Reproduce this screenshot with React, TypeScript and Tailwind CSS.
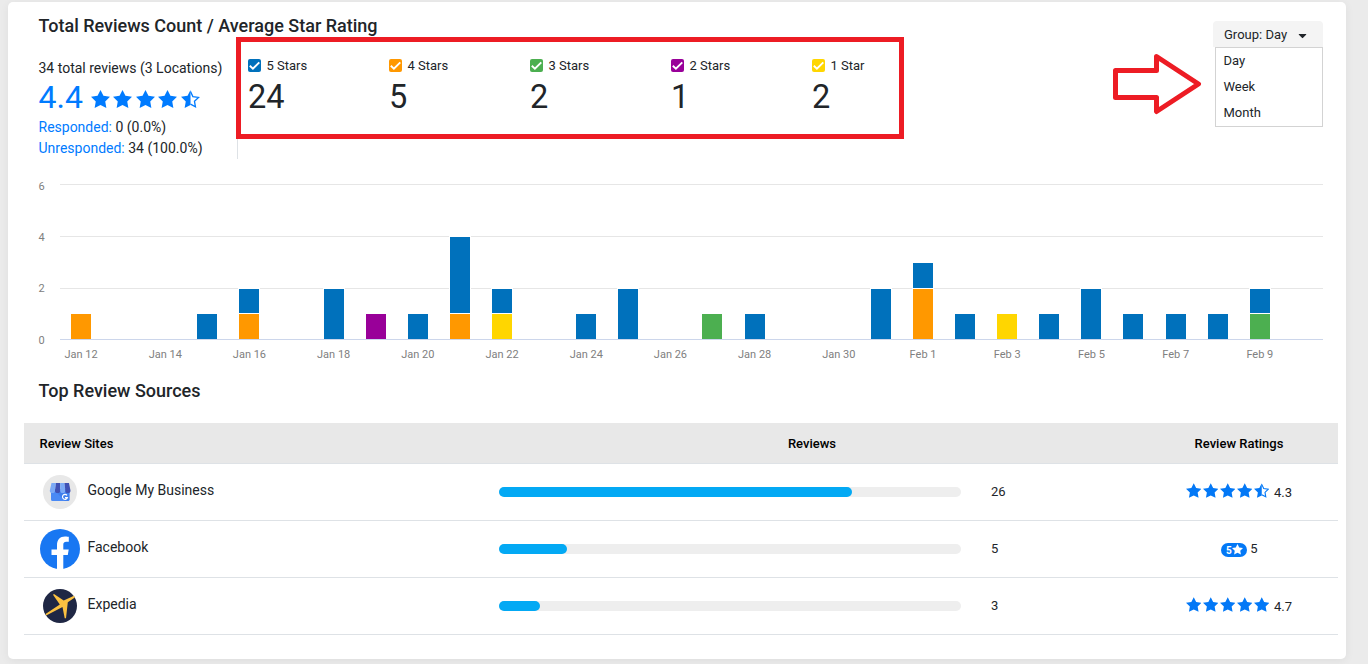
import React from 'react';
import { FaCaretDown } from 'react-icons/fa';

const BLUE = '#0071bc';
const ORANGE = '#ff9800';
const GREEN = '#4caf50';
const PURPLE = '#990099';
const YELLOW = '#ffd600';

const STATS = [
  { label: '5 Stars', count: 24, box: 'bg-[#0071bc]' },
  { label: '4 Stars', count: 5, box: 'bg-[#ff9800]' },
  { label: '3 Stars', count: 2, box: 'bg-[#4caf50]' },
  { label: '2 Stars', count: 1, box: 'bg-[#990099]' },
  { label: '1 Star', count: 2, box: 'bg-[#ffd600]' },
];

// day index (0 = Jan 12) and stacked segments from the bottom up
const BARS: { day: number; stack: [string, number][] }[] = [
  { day: 0, stack: [[ORANGE, 1]] },
  { day: 3, stack: [[BLUE, 1]] },
  { day: 4, stack: [[ORANGE, 1], [BLUE, 1]] },
  { day: 6, stack: [[BLUE, 2]] },
  { day: 7, stack: [[PURPLE, 1]] },
  { day: 8, stack: [[BLUE, 1]] },
  { day: 9, stack: [[ORANGE, 1], [BLUE, 3]] },
  { day: 10, stack: [[YELLOW, 1], [BLUE, 1]] },
  { day: 12, stack: [[BLUE, 1]] },
  { day: 13, stack: [[BLUE, 2]] },
  { day: 15, stack: [[GREEN, 1]] },
  { day: 16, stack: [[BLUE, 1]] },
  { day: 19, stack: [[BLUE, 2]] },
  { day: 20, stack: [[ORANGE, 2], [BLUE, 1]] },
  { day: 21, stack: [[BLUE, 1]] },
  { day: 22, stack: [[YELLOW, 1]] },
  { day: 23, stack: [[BLUE, 1]] },
  { day: 24, stack: [[BLUE, 2]] },
  { day: 25, stack: [[BLUE, 1]] },
  { day: 26, stack: [[BLUE, 1]] },
  { day: 27, stack: [[BLUE, 1]] },
  { day: 28, stack: [[GREEN, 1], [BLUE, 1]] },
];

const DAYS = ['Jan 12', 'Jan 14', 'Jan 16', 'Jan 18', 'Jan 20', 'Jan 22', 'Jan 24', 'Jan 26', 'Jan 28', 'Jan 30', 'Feb 1', 'Feb 3', 'Feb 5', 'Feb 7', 'Feb 9'];

// y of each review count inside the chart
const LEVELS = [179, 154, 129, 103, 77];
const GRID = [
  { label: '6', y: 24, textY: 30 },
  { label: '4', y: 76, textY: 81 },
  { label: '2', y: 128, textY: 132 },
  { label: '0', y: 179, textY: 184 },
];

const STAR = 'M10 0 13.100 6.200 20 7.200 15 12.200 16.200 19 10 15.800 3.800 19 5 12.200 0 7.200 6.900 6.200z';

function Star({ className, half }: { className: string; half?: boolean }) {
  return (
    <svg viewBox="0 0 20 19" className={className} fill="currentColor">
      {half ? (
        <>
          <path d="M10 0V15.800L3.800 19 5 12.200 0 7.200 6.900 6.200z" />
          <path d="M10 1.600 12.500 6.900 18.500 7.800 14.200 11.900 15.200 17.700 10 15" fill="none" stroke="currentColor" strokeWidth="1.400" />
        </>
      ) : (
        <path d={STAR} />
      )}
    </svg>
  );
}

function Checkbox({ className }: { className: string }) {
  return (
    <span className={`inline-flex size-[13px] rounded-[2px] ${className}`}>
      <svg viewBox="0 0 13 13" className="size-[13px]" fill="none" stroke="#fff" strokeWidth="1.9">
        <path d="M1.800 6.800 4.900 9.700 11.300 3.300" />
      </svg>
    </span>
  );
}

function Chart() {
  return (
    <svg width="1293" height="206" viewBox="0 0 1293 206" className="block" fontFamily="Roboto" fontSize="11" fill="#808080">
      {GRID.map((g) => (
        <g key={g.label}>
          <rect x="22" y={g.y} width="1263" height="1" fill={g.label === '0' ? '#ccd6eb' : '#e6e6e6'} />
          <text x="0.5" y={g.textY}>{g.label}</text>
        </g>
      ))}
      {BARS.map((b) => {
        const x = Math.round(32.99 + 42.1 * b.day);
        let total = 0;
        return b.stack.map(([color, n]) => {
          const bottom = total === 0 ? LEVELS[0] : LEVELS[total] - 1;
          total += n;
          const top = LEVELS[total];
          return (
            <g key={`${b.day}-${color}`}>
              <rect x={x - 1} y={top - 1} width="22" height={bottom - top + 1} fill="#fff" />
              <rect x={x} y={top} width="20" height={bottom - top} fill={color} />
            </g>
          );
        });
      })}
      {DAYS.map((d, i) => (
        <text key={d} x={43.05 + 84.2 * i} y="198" textAnchor="middle">{d}</text>
      ))}
    </svg>
  );
}

function GoogleLogo() {
  return (
    <svg viewBox="0 0 34 34" className="size-[34px]">
      <circle cx="17" cy="17" r="17" fill="#e8e8e8" />
      <path d="M8 14h18.500v10.500a1.500 1.500 0 0 1-1.500 1.500H9.500A1.500 1.500 0 0 1 8 24.500z" fill="#4989f5" />
      <path d="M12 16h14.500v9l-1.500 1h-3z" fill="#3b78e7" opacity=".6" />
      <path d="M8.500 8H13l-1 7.500a2.500 2.500 0 0 1-5.200 0z" fill="#7baaf7" />
      <path d="M13 8h4.200v7.500a2.600 2.600 0 0 1-5.200 0z" fill="#3f51b5" />
      <path d="M17.200 8h4.300l.8 7.500a2.500 2.500 0 0 1-5.100 0z" fill="#7baaf7" />
      <path d="M21.500 8H26l1.500 7.500a2.600 2.600 0 0 1-5.200 0z" fill="#3f51b5" />
      <path d="M24 20.300a2.500 2.500 0 1 0 .4 2.300H22" fill="none" stroke="#fff" strokeWidth="1.200" />
    </svg>
  );
}

function FacebookLogo() {
  return (
    <svg viewBox="0 0 40 40" className="size-10">
      <circle cx="20" cy="20" r="20" fill="#1877f2" />
      <path d="M17 40V26h-5.500v-5.500H17v-4.200c0-5.500 3-8.800 8-8.800 1.700 0 3.800.3 3.800.3v5h-2.500c-2.400 0-3 1.400-3 3v4.700h5.400L27.800 26h-4.500v14z" fill="#fff" />
    </svg>
  );
}

function ExpediaLogo() {
  return (
    <svg viewBox="0 0 34 34" className="size-[34px]">
      <circle cx="17" cy="17" r="17" fill="#1f2744" />
      <path d="M2.500 24.900 16.800 15.600 10 5.700 11 5 20.700 11.600 31 6.700 31.800 8.400 24.800 13.300 23 29.200 21.700 29.200 19.500 18 3.200 26.500z" fill="#fbc141" />
    </svg>
  );
}

function Stars({ half }: { half?: boolean }) {
  return (
    <span className="-mt-[3px] flex gap-[1.4px] text-[#0378f6]">
      <Star className="h-[15px] w-[15.5px]" />
      <Star className="h-[15px] w-[15.5px]" />
      <Star className="h-[15px] w-[15.5px]" />
      <Star className="h-[15px] w-[15.5px]" />
      <Star className="h-[15px] w-[15.5px]" half={half} />
    </span>
  );
}

const SOURCES = [
  {
    name: 'Google My Business',
    logo: <GoogleLogo />,
    count: 26,
    rating: <><Stars half /><span className="ml-[5px] mt-[2px]">4.3</span></>,
  },
  {
    name: 'Facebook',
    logo: <FacebookLogo />,
    count: 5,
    rating: (
      <>
        <span className="ml-px mt-[2px] flex h-[14px] w-[26px] items-center justify-center rounded-full bg-[#0378f6] text-[10px] font-bold text-white">
          5<Star className="-mt-px h-[10.5px] w-[11px]" />
        </span>
        <span className="ml-[3px]">5</span>
      </>
    ),
  },
  {
    name: 'Expedia',
    logo: <ExpediaLogo />,
    count: 3,
    rating: <><Stars /><span className="ml-[5px] mt-[2px]">4.7</span></>,
  },
];

export default function App() {
  return (
    <div className="relative h-[664px] w-[1368px] overflow-hidden bg-[#ebebeb] px-2 pt-[2px] font-['Roboto',sans-serif] text-[#212529]">
      <div className="h-[657px] w-[1338px] rounded-[5px] bg-white shadow-[0_2px_10px_rgba(0,0,0,0.06)]">
        <div className="flex h-[158px] justify-between pl-[30.5px] pr-[23px]">
          <div className="pt-3">
            <h2 className="text-[18px] font-medium leading-6">Total Reviews Count / Average Star Rating</h2>
            <div className="flex">
              <div className="w-[198.5px] whitespace-nowrap pt-5 text-[14px] leading-[21px]">
                <div className="h-5 leading-5">34 total reviews (3 Locations)</div>
                <div className="flex h-[39px] items-center text-[#007bff]">
                  <span className="text-[32px] leading-[39px]">4.4</span>
                  <span className="ml-[8px] mt-[3px] flex gap-[3.5px]">
                    <Star className="h-[18px] w-[19px]" />
                    <Star className="h-[18px] w-[19px]" />
                    <Star className="h-[18px] w-[19px]" />
                    <Star className="h-[18px] w-[19px]" />
                    <Star className="h-[18px] w-[19px]" half />
                  </span>
                </div>
                <div><span className="text-[#007bff]">Responded:</span> 0 (0.0%)</div>
                <div><span className="text-[#007bff]">Unresponded:</span> 34 (100.0%)</div>
              </div>
              <div className="flex h-[121px] border-l border-[#dee2e6] pl-[10px]">
                {STATS.map((s) => (
                  <div key={s.label} className="w-[141px] pt-[18px]">
                    <div className="flex h-5 items-center gap-[5.5px] text-[13px]">
                      <Checkbox className={`${s.box} -mt-px`} />
                      {s.label}
                    </div>
                    <div className="text-[32.5px] leading-[43px]">{s.count}</div>
                  </div>
                ))}
              </div>
            </div>
          </div>
          <div className="flex flex-col items-end pt-[19px] text-[13px]">
            <button className="flex h-[26px] w-[110px] items-center rounded-t-[4px] bg-[#f4f4f4] pl-[11px] pt-px">
              Group: Day
              <FaCaretDown className="ml-[9px] mt-px h-[13px] w-[13px]" />
            </button>
            <div className="w-[108px] border border-[#d3d3d3] bg-white pl-[7.5px]">
              <div className="h-[26px] leading-[26px]">Day</div>
              <div className="h-[26px] leading-[26px]">Week</div>
              <div className="h-[26px] leading-[26px]">Month</div>
            </div>
          </div>
        </div>

        <div className="pl-[30px]">
          <Chart />
        </div>

        <h2 className="pl-[30.5px] pt-[13px] text-[18px] font-medium leading-6">Top Review Sources</h2>

        <div className="mx-4 mt-5 w-[1314px] text-[13px]">
          <div className="grid h-[41px] grid-cols-[460px_656px_198px] items-center border-b border-[#dee2e6] bg-[#e8e8e8] pt-px font-medium text-black">
            <div className="pl-[15.5px]">Review Sites</div>
            <div className="text-center">Reviews</div>
            <div className="text-center">Review Ratings</div>
          </div>
          {SOURCES.map((s) => (
            <div key={s.name} className="grid h-[57px] grid-cols-[460px_656px_198px] items-center border-b border-[#dee2e6]">
              <div className="flex items-center pl-4">
                <div className="flex h-10 w-10 items-center justify-center">{s.logo}</div>
                <div className="-mt-[3px] ml-[7.5px] text-[14px]">{s.name}</div>
              </div>
              <div className="flex items-center pl-[15px]">
                <div className="h-[10px] w-[462px] rounded-full bg-[#eee]">
                  <div className="h-[10px] rounded-full bg-[#03a9f4]" style={{ width: `${(s.count / 34) * 100}%` }} />
                </div>
                <div className="ml-[30px]">{s.count}</div>
              </div>
              <div className="flex items-center justify-center">{s.rating}</div>
            </div>
          ))}
        </div>
      </div>

      {/* callouts */}
      <div className="absolute left-[236px] top-[37px] h-[102px] w-[668px] border-[5px] border-[#ed1c24]" />
      <svg className="absolute left-[1110px] top-[50px]" width="95" height="68" viewBox="0 0 95 68" fill="none" stroke="#ed1c24" strokeWidth="5" strokeLinejoin="round">
        <path d="M5.500 20.500H46.500V6.500L88.500 34 46.500 61.500V47.500H5.500z" />
      </svg>
    </div>
  );
}
